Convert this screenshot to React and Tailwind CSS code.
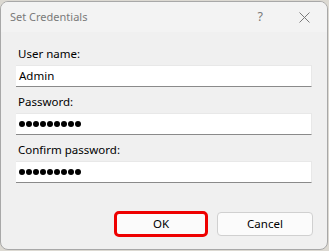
import React from "react";

const font = { fontFamily: '"Noto Sans", "Open Sans", sans-serif' };

const Dots = () => (
  <div className="flex items-center gap-[1.5px]">
    {Array.from({ length: 9 }).map((_, i) => (
      <span key={i} className="block w-[5.5px] h-[5.5px] rounded-full bg-black" />
    ))}
  </div>
);

const Field = ({ label, children }) => (
  <div className="flex flex-col">
    <div className="h-4 leading-4 text-[11.5px] text-black pl-[2px]">{label}</div>
    <div className="mt-[3px] h-[22px] w-[296px] bg-white border-b border-[#8a8a8a] border-t border-r border-t-[#e8e8e8] border-r-[#e8e8e8] flex items-center pl-[3px] text-[11.5px] text-black">
      {children}
    </div>
  </div>
);

export default function App() {
  return (
    <div className="w-[329px] h-[251px] bg-[#dcd9d2] overflow-hidden" style={font}>
      <div className="mt-px w-[328px] h-[249px] bg-[#f0f0f0] border border-[#a8a8a8] rounded-lg overflow-hidden flex flex-col">
        {/* Title bar */}
        <div className="h-[30px] bg-[#f3f3f3] flex items-center pl-[9px] shrink-0">
          <span className="text-[11px] text-[#7a7a7a]">Set Credentials</span>
          <div className="flex-1" />
          <span className="text-[12.5px] text-[#7a7a7a] mr-[36px]">?</span>
          <svg width="11" height="11" viewBox="0 0 11 11" className="mr-[17px]">
            <path d="M0.5 0.5 L10.5 10.5 M10.5 0.5 L0.5 10.5" stroke="#7a7a7a" strokeWidth="1" />
          </svg>
        </div>

        {/* Body */}
        <div className="pl-[15px] pt-[14px] flex flex-col gap-[7px]">
          <Field label="User name:">Admin</Field>
          <Field label="Password:"><Dots /></Field>
          <Field label="Confirm password:"><Dots /></Field>
        </div>

        <div className="flex-1" />

        {/* Buttons */}
        <div className="flex items-center justify-end pr-[14px] pb-[12px] gap-[9px]">
          <div className="w-[94px] h-[26px] rounded-[5px] border-[3px] border-[#ee0000] bg-[#fbfbfb] flex items-center justify-center text-[11.5px] text-black">
            OK
          </div>
          <div className="w-[96px] h-[24px] rounded-[4px] border border-[#d0d0d0] bg-[#fbfbfb] flex items-center justify-center text-[11.5px] text-black">
            Cancel
          </div>
        </div>
      </div>
    </div>
  );
}
